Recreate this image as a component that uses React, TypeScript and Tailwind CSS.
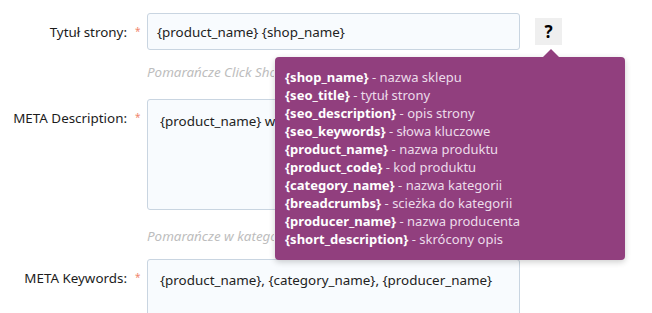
import React from "react";

const vars: [string, string][] = [
  ["{shop_name}", "nazwa sklepu"],
  ["{seo_title}", "tytuł strony"],
  ["{seo_description}", "opis strony"],
  ["{seo_keywords}", "słowa kluczowe"],
  ["{product_name}", "nazwa produktu"],
  ["{product_code}", "kod produktu"],
  ["{category_name}", "nazwa kategorii"],
  ["{breadcrumbs}", "scieżka do kategorii"],
  ["{producer_name}", "nazwa producenta"],
  ["{short_description}", "skrócony opis"],
];

function Label({ text }: { text: string }) {
  return (
    <div className="flex w-[147px] shrink-0 items-start pt-[9px]">
      <div className="w-[127px] text-right text-[13.4px] leading-[20px] text-[#1c1c1c]">{text}</div>
      <div className="ml-[8px] text-[10px] leading-[18px] text-[#f0876d]">*</div>
    </div>
  );
}

export default function App() {
  return (
    <div
      className="relative h-[313px] w-[652px] overflow-hidden bg-white"
      style={{ fontFamily: '"Noto Sans", "Open Sans", sans-serif' }}
    >
      <div className="flex flex-col pt-[13px]">
        {/* Row 1 */}
        <div className="relative flex">
          <Label text="Tytuł strony:" />
          <div className="flex flex-col">
            <div className="flex items-start">
              <div className="h-[37px] w-[373px] rounded-[3px] border border-[#c9d5e1] bg-[#f8fbfe] px-[9px] py-[8px] text-[13.4px] leading-[20px] text-[#222]">
                {"{product_name} {shop_name}"}
              </div>
              <div className="ml-[15px] mt-[5px] flex h-[27px] w-[27px] items-center justify-center bg-[#efefef] text-[17px] font-bold leading-none text-black">
                ?
              </div>
            </div>
            <div className="mt-[12px] w-[127px] overflow-hidden whitespace-nowrap text-[13.4px] italic leading-[20px] text-[#bdbdbd]">
              Pomarańcze Click Shop
            </div>
          </div>
        </div>

        {/* Row 2 */}
        <div className="mt-[17px] flex">
          <Label text="META Description:" />
          <div className="flex flex-col">
            <div className="h-[111px] w-[373px] rounded-[3px] border border-[#c9d5e1] bg-[#f8fbfe] px-[12px] py-[11px] text-[13.4px] leading-[20px] text-[#222]">
              <div className="w-[115px] overflow-hidden whitespace-nowrap">
                {"{product_name} w kategorii {category_name}"}
              </div>
            </div>
            <div className="mt-[16px] w-[127px] overflow-hidden whitespace-nowrap text-[13.4px] italic leading-[20px] text-[#bdbdbd]">
              Pomarańcze w kategorii Owoce
            </div>
          </div>
        </div>

        {/* Row 3 */}
        <div className="mt-[13px] flex">
          <Label text="META Keywords:" />
          <div className="h-[60px] w-[373px] rounded-[3px] border border-[#c9d5e1] bg-[#f8fbfe] px-[12px] py-[10px] text-[13.4px] leading-[20px] text-[#222]">
            {"{product_name}, {category_name}, {producer_name}"}
          </div>
        </div>
      </div>

      {/* Tooltip */}
      <div className="absolute left-[275px] top-[57px] w-[350px] rounded-[4px] bg-[#913f7e] px-[10px] pb-[12px] pt-[11px] text-[13px] leading-[18px] text-white shadow-[0_2px_6px_rgba(0,0,0,0.2)]">
        <div className="absolute -top-[8px] left-[268px] h-0 w-0 border-x-[8px] border-b-[8px] border-x-transparent border-b-[#913f7e]" />
        {vars.map(([k, v]) => (
          <div key={k} className="whitespace-nowrap">
            <span className="font-bold">{k}</span>
            <span className="text-[#ecdcea]"> - {v}</span>
          </div>
        ))}
      </div>
    </div>
  );
}
